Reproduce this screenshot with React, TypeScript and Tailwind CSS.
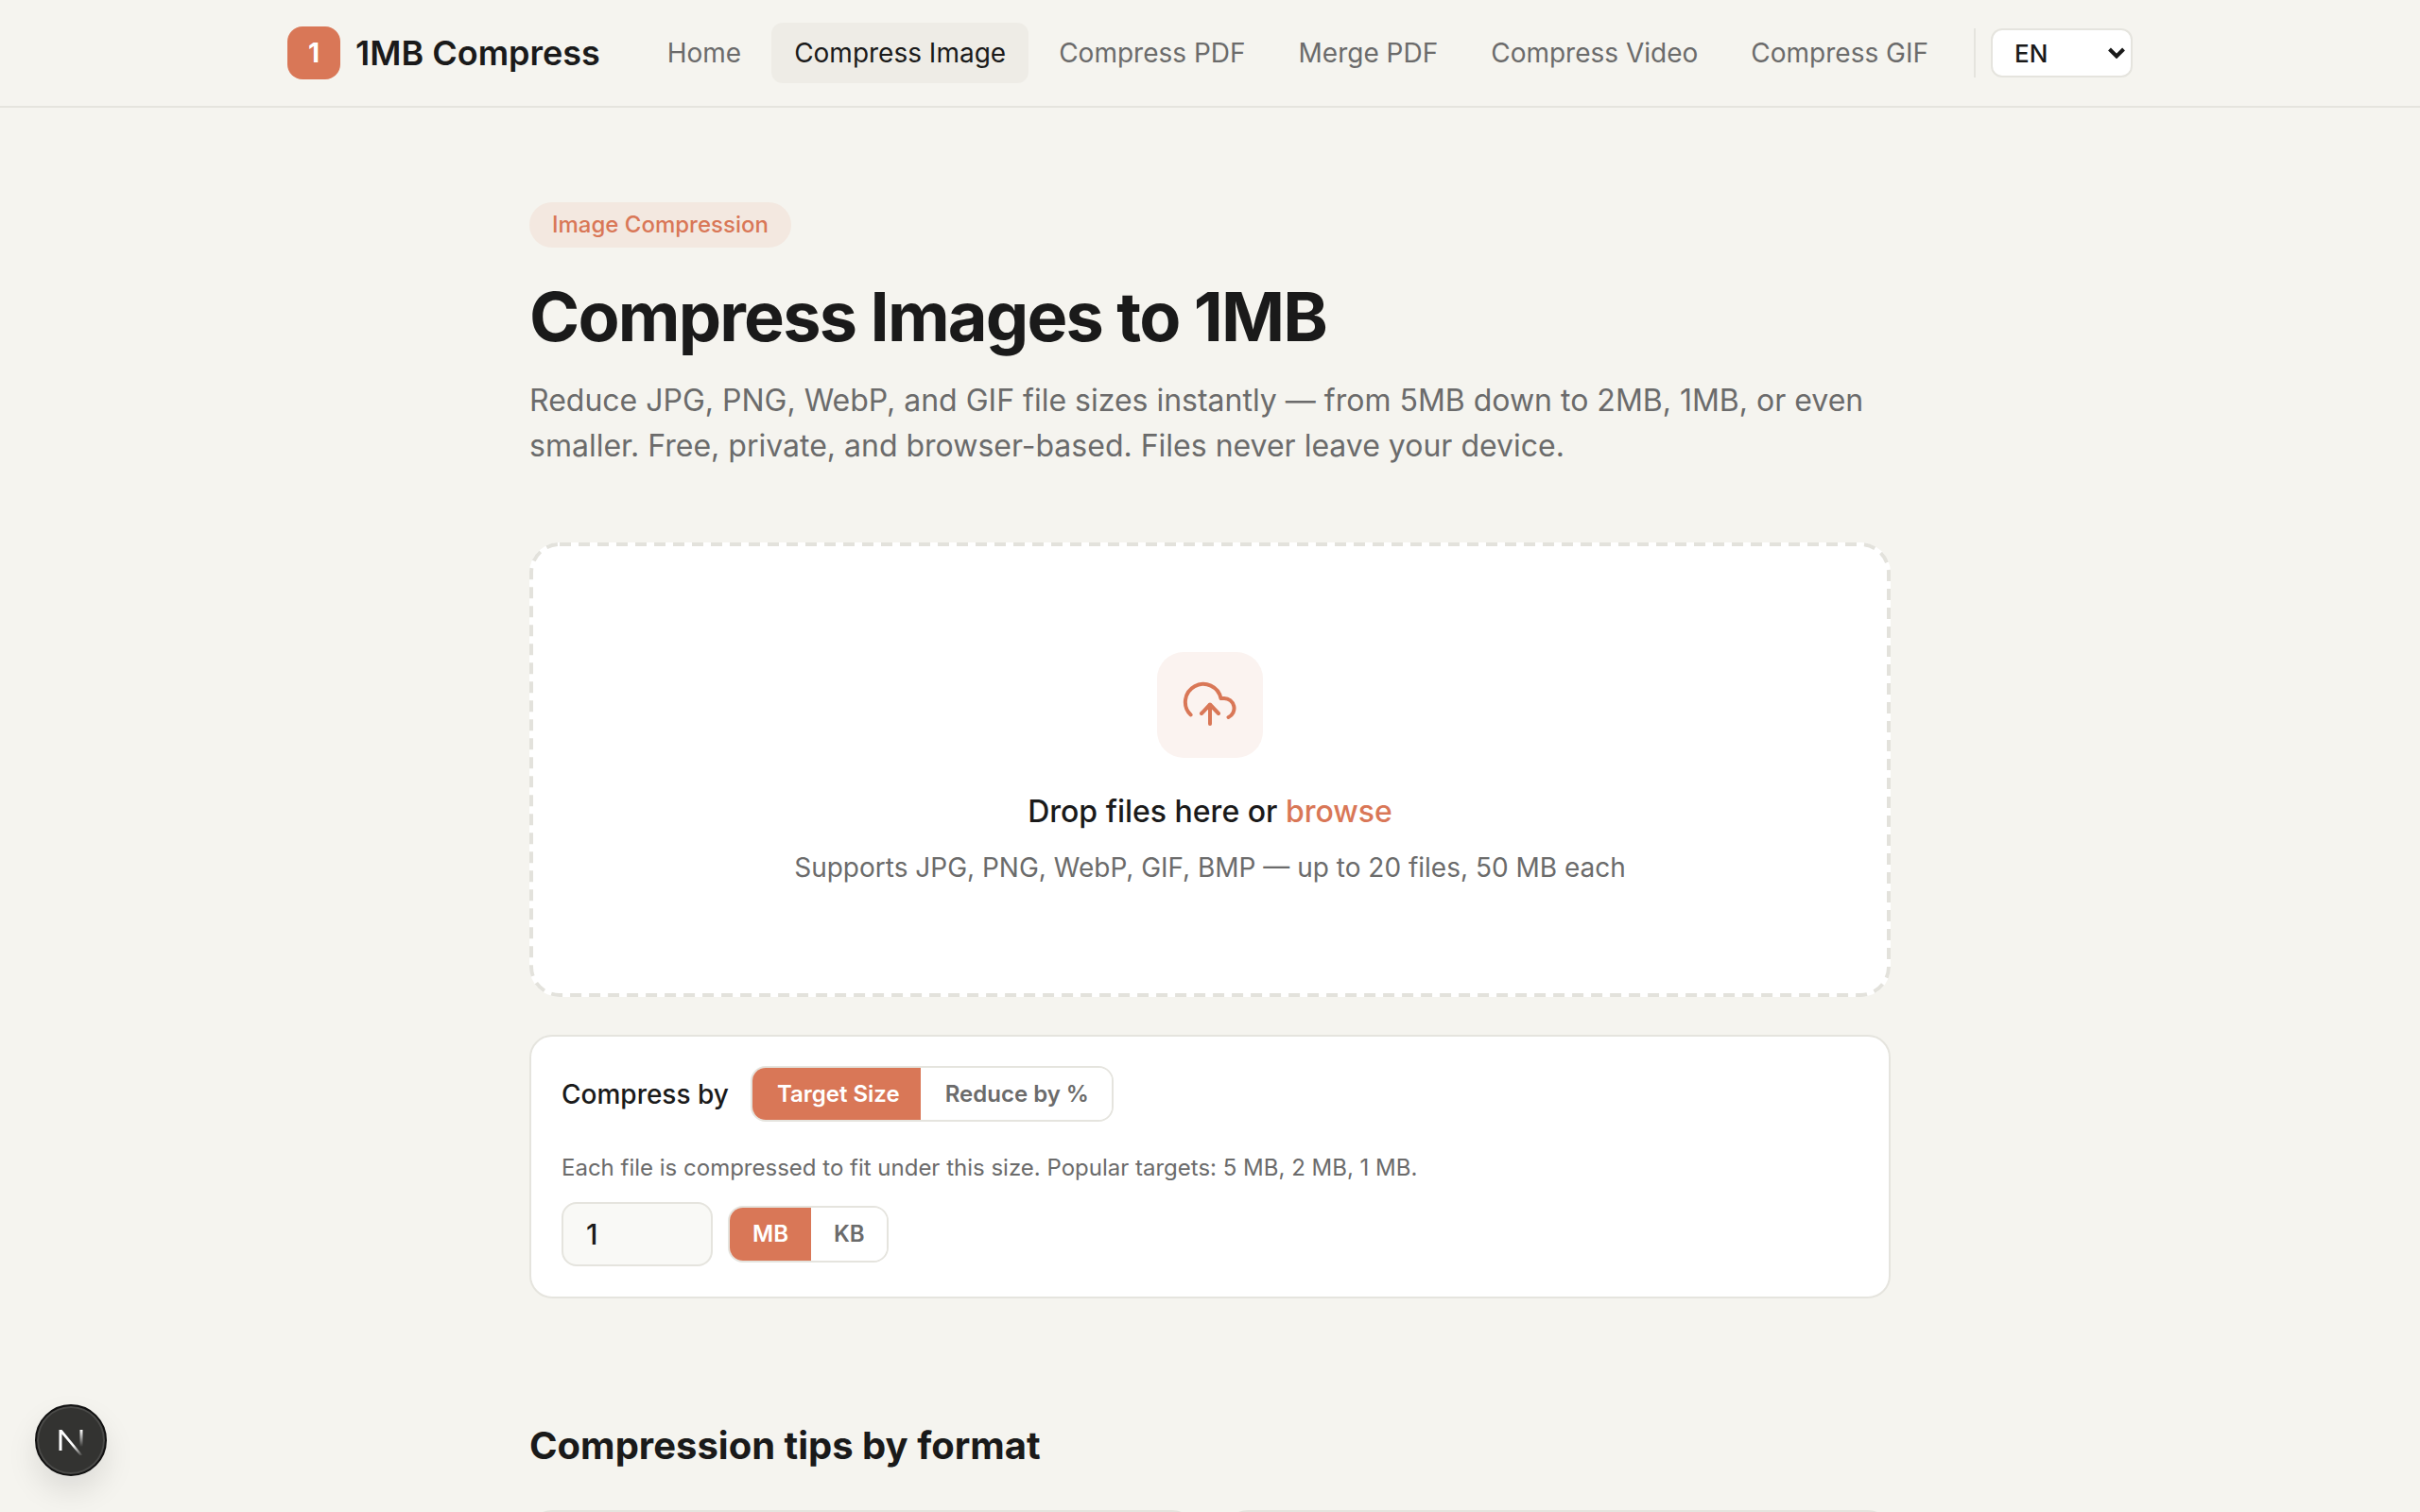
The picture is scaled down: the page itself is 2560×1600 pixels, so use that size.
import React from "react";

const font = { fontFamily: "Inter, 'Liberation Sans', sans-serif" };

function NavItem({ label, active }: { label: string; active?: boolean }) {
  return (
    <a
      className={
        active
          ? "rounded-[12px] bg-[#eeece6] px-6 py-[14px] text-[28px] leading-[36px] text-[#1a1a1a]"
          : "rounded-[12px] px-6 py-[14px] text-[28px] leading-[36px] text-[#6b6b6b]"
      }
    >
      {label}
    </a>
  );
}

function Seg({ children, active, className }: { children: React.ReactNode; active?: boolean; className: string }) {
  return (
    <button
      className={
        (active ? "bg-[#d97757] text-white " : "bg-white text-[#6b6b6b] ") +
        "flex items-center justify-center text-[24px] font-semibold " +
        className
      }
    >
      {children}
    </button>
  );
}

function TipCard() {
  return <div className="h-[200px] rounded-[24px] border-2 border-[#e5e4de] bg-white" />;
}

export default function App() {
  return (
    <div className="relative h-[1600px] overflow-hidden bg-[#f5f4ef] text-[#1a1a1a]" style={font}>
      <header className="flex h-[114px] items-center justify-center border-b-2 border-[#e5e4de]">
        <div className="flex w-[1952px] items-center">
          <div className="flex items-center gap-4">
            <div className="flex h-[56px] w-[56px] items-center justify-center rounded-[16px] bg-[#d97757] text-[28px] font-bold text-white">
              1
            </div>
            <span className="text-[36px] font-semibold">1MB Compress</span>
          </div>
          <nav className="ml-auto flex items-center gap-2">
            <NavItem label="Home" />
            <NavItem label="Compress Image" active />
            <NavItem label="Compress PDF" />
            <NavItem label="Merge PDF" />
            <NavItem label="Compress Video" />
            <NavItem label="Compress GIF" />
          </nav>
          <div className="ml-6 h-[52px] w-[2px] bg-[#e5e4de]" />
          <div className="relative ml-4">
            <select className="block h-[52px] w-[150px] appearance-none rounded-[12px] border-2 border-[#e5e4de] bg-white pl-[23px] pr-2 text-[26px] font-medium text-[#1a1a1a]">
              <option>EN</option>
            </select>
            <svg
              className="pointer-events-none absolute right-[8px] top-[20px]"
              width="18"
              height="12"
              viewBox="0 0 18 12"
              fill="none"
              stroke="#1a1a1a"
              strokeWidth="4"
            >
              <path d="M1.5 2 9 9.5 16.5 2" />
            </svg>
          </div>
        </div>
      </header>

      <main className="mx-auto w-[1440px] pt-[100px]">
        <span className="inline-flex h-[48px] items-center rounded-full bg-[#f3e8e0] px-6 text-[24px] font-medium text-[#d97757]">
          Image Compression
        </span>
        <h1 className="mt-[30px] text-[72px] font-bold leading-[86px] tracking-[-1.8px]">Compress Images to 1MB</h1>
        <p className="mt-[22px] text-[32px] leading-[48px] text-[#6b6b6b]">
          Reduce JPG, PNG, WebP, and GIF file sizes instantly — from 5MB down to 2MB, 1MB, or even smaller. Free, private, and browser-based. Files never leave your device.
        </p>

        <section className="relative mt-[78px] flex h-[481px] flex-col items-center rounded-[32px] bg-white pt-[116px]">
          <svg className="pointer-events-none absolute left-0 top-0" width="1440" height="481" fill="none">
            <rect x="2" y="2" width="1436" height="477" rx="30" stroke="#e3e2dc" strokeWidth="4" strokeDasharray="12 8" />
          </svg>
          <div className="flex h-[112px] w-[112px] items-center justify-center rounded-[28px] bg-[#fbf3f0]">
            <svg width="112" height="112" viewBox="0 0 112 112" fill="none" stroke="#d97757" strokeWidth="4" strokeLinecap="round" strokeLinejoin="round">
              <path d="M35.6 66.4A19 19 0 1 1 67.5 49H71A10.5 10.5 0 0 1 75.5 69" />
              <path d="M56 76V56" />
              <path d="M47 65l9-9.5 9 9.5" />
            </svg>
          </div>
          <p className="mt-[33px] text-[32px] font-medium leading-[48px]">
            Drop files here or <span className="text-[#d97757]">browse</span>
          </p>
          <p className="mt-[14px] text-[28px] leading-[42px] text-[#6b6b6b]">
            Supports JPG, PNG, WebP, GIF, BMP — up to 20 files, 50 MB each
          </p>
        </section>

        <section className="mt-[40px] rounded-[24px] border-2 border-[#e5e4de] bg-white px-[32px] pb-[32px] pt-[31px]">
          <div className="flex items-center gap-[23px]">
            <span className="text-[28px] font-medium">Compress by</span>
            <div className="flex overflow-hidden rounded-[16px] border-2 border-[#e5e4de]">
              <Seg active className="h-[55px] pl-[26px] pr-[22px]">Target Size</Seg>
              <Seg className="h-[55px] pl-[26px] pr-6">Reduce by %</Seg>
            </div>
          </div>
          <p className="mt-[31px] text-[24px] leading-[36px] text-[#6b6b6b]">
            Each file is compressed to fit under this size. Popular targets: 5 MB, 2 MB, 1 MB.
          </p>
          <div className="mt-[18px] flex items-center gap-4">
            <input
              readOnly
              value="1"
              className="h-[68px] w-[160px] rounded-[16px] border-2 border-[#e5e4de] bg-[#f9f9f6] px-6 text-[30px] font-medium outline-none"
            />
            <div className="flex overflow-hidden rounded-[16px] border-2 border-[#e5e4de]">
              <Seg active className="h-[56px] px-6">MB</Seg>
              <Seg className="h-[56px] pl-6 pr-[23px]">KB</Seg>
            </div>
          </div>
        </section>

        <h2 className="mt-[130px] text-[40px] font-bold leading-[52px]">Compression tips by format</h2>
        <div className="mt-[42px] grid grid-cols-2 gap-8">
          <TipCard />
          <TipCard />
        </div>
      </main>

      <div className="absolute bottom-[38px] left-[37px] flex h-[76px] w-[76px] items-center justify-center rounded-full border-2 border-[#111] bg-[#333331] shadow-[inset_0_0_0_2px_#4a4a48,0_16px_32px_rgba(0,0,0,0.1)]">
        <svg width="40" height="40" viewBox="0 0 40 40" fill="none">
          <defs>
            <linearGradient id="ng" x1="14" y1="14" x2="33" y2="36" gradientUnits="userSpaceOnUse">
              <stop offset="0.5" stopColor="#fff" />
              <stop offset="1" stopColor="#fff" stopOpacity="0" />
            </linearGradient>
            <linearGradient id="ng2" x1="31" y1="9" x2="31" y2="27" gradientUnits="userSpaceOnUse">
              <stop stopColor="#fff" />
              <stop offset="1" stopColor="#fff" stopOpacity="0" />
            </linearGradient>
          </defs>
          <path d="M7.5 9h3l22 27h-3L10.5 13.5V31h-3z" fill="url(#ng)" />
          <rect x="29.5" y="9" width="3" height="18" fill="url(#ng2)" />
        </svg>
      </div>
    </div>
  );
}
